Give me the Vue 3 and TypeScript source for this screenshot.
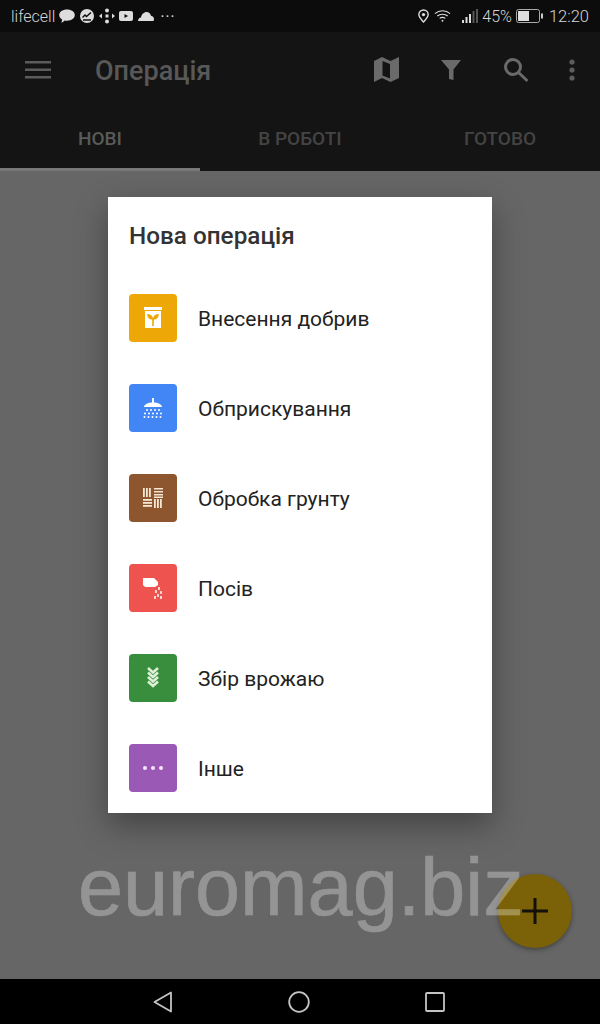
<script setup lang="ts">
interface Operation {
  name: string
  color: string
  icon: 'fert' | 'spray' | 'soil' | 'seed' | 'harvest' | 'other'
}

const operations: Operation[] = [
  { name: 'Внесення добрив', color: '#eda707', icon: 'fert' },
  { name: 'Обприскування', color: '#4285f4', icon: 'spray' },
  { name: 'Обробка грунту', color: '#8e562e', icon: 'soil' },
  { name: 'Посів', color: '#ef5350', icon: 'seed' },
  { name: 'Збір врожаю', color: '#388e3c', icon: 'harvest' },
  { name: 'Інше', color: '#9b59b6', icon: 'other' },
]

const tabs = ['НОВІ', 'В РОБОТІ', 'ГОТОВО']
</script>

<template>
  <div class="phone">
    <div class="status">
      <span class="carrier">lifecell</span>
      <svg class="st-icon" width="16" height="15" viewBox="2 1 16 15"><path d="M10 1.500c4.600 0 7.800 2.400 7.800 5.600S14.600 12.700 10 12.700c-.8 0-1.500-.1-2.200-.2L4.500 15l.6-3.600C3.200 10.400 2.200 8.900 2.200 7.100 2.200 3.900 5.400 1.500 10 1.500z" fill="#ddd" /></svg>
      <svg class="st-icon" width="16" height="16" viewBox="0 0 16 16"><circle cx="8" cy="8" r="7" fill="#ddd" /><path d="M3.500 9.500 6 7l1.500 1.500L12 4.500M4 12h8" stroke="#0c0c0c" stroke-width="1.400" fill="none" /></svg>
      <svg class="st-icon" width="16" height="16" viewBox="0 0 16 16" fill="#ddd"><circle cx="8" cy="2.500" r="2" /><circle cx="8" cy="13.500" r="2" /><rect x="6.500" y="6.500" width="3" height="3" /><path d="M0 8l3-2.500v5zM16 8l-3-2.500v5z" /></svg>
      <svg class="st-icon" width="15" height="12" viewBox="0 0 15 12"><rect width="14" height="10" y="1" rx="2" fill="#ddd" /><path d="M5.500 4v4l3.500-2z" fill="#0c0c0c" /></svg>
      <svg class="st-icon" width="16" height="11" viewBox="0 0 16 11"><path d="M0 10c0-2 1.400-3.300 3-3.500C3.600 3.300 6 1 8.500 1c2.300 0 4 1.500 4.500 3.700 1.700.3 3 1.600 3 3.300 0 .8-.2 1.500-.5 2z" fill="#ddd" /></svg>
      <span class="st-dots">···</span>
      <span class="st-spacer"></span>
      <svg class="st-icon" width="13" height="16" viewBox="0 0 14 16"><path d="M7 1.500a5 5 0 0 1 5 5c0 3-3 5.700-5 8-2-2.300-5-5-5-8a5 5 0 0 1 5-5z" fill="none" stroke="#ddd" stroke-width="1.500" /><circle cx="7" cy="6.500" r="1.800" fill="#ddd" /></svg>
      <svg class="st-icon" width="17" height="14" viewBox="0 0 18 14" fill="none" stroke="#ddd" stroke-width="1.200"><path d="M1 4.500c4.500-4 11.500-4 16 0M3.500 7c3-2.500 8-2.500 11 0M6 9.500c1.700-1.200 4.300-1.200 6 0" /><circle cx="9" cy="12" r="1" fill="#ddd" stroke="none" /></svg>
      <svg class="st-signal" width="16" height="14" viewBox="0 0 16 14"><path d="M0 11h2v3H0zM3.500 8h2v6h-2zM7 5h2v9H7z" fill="#ddd" /><path d="M10.500 2h2v12h-2zM14 0h2v14h-2z" fill="#555" /></svg>
      <span class="st-text">45%</span>
      <svg class="st-icon" width="27" height="14" viewBox="0 0 27 14"><rect x=".5" y=".5" width="23" height="13" rx="2" fill="none" stroke="#aaa" /><rect x="2" y="2" width="11" height="10" fill="#ddd" /><rect x="25" y="4.500" width="2" height="5" fill="#ccc" /></svg>
      <span class="st-text st-time">12:20</span>
    </div>

    <div class="toolbar">
      <svg class="tb-menu" width="26" height="18" viewBox="0 0 26 18" fill="#5c5c5c"><rect y="0" width="26" height="2.500" /><rect y="7.500" width="26" height="2.500" /><rect y="15" width="26" height="2.500" /></svg>
      <span class="tb-title">Операція</span>
      <span class="tb-spacer"></span>
      <svg class="tb-map" width="26" height="26" viewBox="0 0 26 26"><path d="M0 4l8-4 8.500 4L25 0v21l-8.500 4L8 21l-8 4z" fill="#6a6a6a" /><path d="M8.500 4l7.500 3v14.500L8.500 18.500z" fill="#141414" /></svg>
      <svg class="tb-filter" width="20" height="24" viewBox="0 0 20 24"><path d="M0 2h20l-7.500 9.500V22l-4.500-1V11.500z" fill="#6a6a6a" /></svg>
      <svg class="tb-search" width="26" height="26" viewBox="0 0 26 26" fill="none" stroke="#6a6a6a" stroke-width="3"><circle cx="10" cy="10" r="7.500" /><path d="M15.500 15.500 24.500 24" /></svg>
      <svg class="tb-more" width="6" height="24" viewBox="0 0 6 24" fill="#5c5c5c"><circle cx="3" cy="4" r="2.600" /><circle cx="3" cy="12" r="2.600" /><circle cx="3" cy="20" r="2.600" /></svg>
    </div>

    <div class="tabs">
      <div v-for="(tab, i) in tabs" :key="tab" :class="['tab', { 'tab--active': i === 0 }]">{{ tab }}</div>
    </div>

    <div class="content">
      <div class="dialog">
        <div class="dialog-title">Нова операція</div>
        <div v-for="op in operations" :key="op.name" class="row">
          <span class="badge" :style="{ background: op.color }">
            <svg width="48" height="48" viewBox="0 0 48 48">
              <g v-if="op.icon === 'fert'">
                <rect x="15" y="13" width="18" height="3" fill="#fff" />
                <rect x="16" y="17" width="16" height="17" fill="#fff" />
                <path d="M23.200 32v-6.500c-3 0-5-2-5-5.500 3 0 5 1.500 5.800 4 .8-2.500 2.800-4 5.800-4 0 3.500-2 5.500-5 5.500V32z" fill="#eda707" />
              </g>
              <g v-else-if="op.icon === 'spray'" fill="#fff">
                <rect x="23" y="14" width="2" height="5" />
                <path d="M15 23c0-2.500 4-4.500 9-4.500s9 2 9 4.500z" />
                <g>
                  <circle v-for="x in [18, 22, 26, 30]" :key="'a' + x" :cx="x" cy="26" r="1" />
                  <circle v-for="x in [16, 20, 24, 28, 32]" :key="'b' + x" :cx="x" cy="29.500" r="1" />
                  <circle v-for="x in [15, 19, 23, 27, 31]" :key="'c' + x" :cx="x + 0.500" cy="33" r="1" />
                </g>
              </g>
              <g v-else-if="op.icon === 'soil'" fill="#f6e6d4">
                <rect v-for="x in [14, 17, 20]" :key="'v1' + x" :x="x" y="14" width="1.800" height="9" />
                <rect v-for="y in [14, 17, 20, 22.500]" :key="'h1' + y" x="25" :y="y" width="9" height="1.500" />
                <rect v-for="y in [25, 28, 31]" :key="'h2' + y" x="14" :y="y" width="9" height="1.800" />
                <rect v-for="x in [25, 28, 31]" :key="'v2' + x" :x="x" y="25" width="1.800" height="9" />
              </g>
              <g v-else-if="op.icon === 'seed'" fill="#fff">
                <path d="M14 14h11l4 4v3l-3 2H16l-2-2z" />
                <g fill="#f9d7d0">
                  <rect x="29" y="23" width="2" height="3" />
                  <rect x="26" y="26" width="2" height="3" />
                  <rect x="31" y="27" width="2" height="3" />
                  <rect x="28" y="30" width="2" height="3" />
                  <rect x="25" y="32" width="2" height="3" />
                  <rect x="31" y="32" width="2" height="3" />
                </g>
              </g>
              <g v-else-if="op.icon === 'harvest'" fill="none" stroke="#dff0d8" stroke-width="2.600">
                <path d="M19 14l5 4.500 5-4.500" />
                <path d="M19 18.500l5 4.500 5-4.500" />
                <path d="M19 23l5 4.500 5-4.500" />
                <path d="M19 27.500l5 4.500 5-4.500" />
              </g>
              <g v-else fill="#f6e6fb">
                <circle cx="16" cy="24" r="2" />
                <circle cx="24" cy="24" r="2" />
                <circle cx="32" cy="24" r="2" />
              </g>
            </svg>
          </span>
          <span class="row-name">{{ op.name }}</span>
        </div>
      </div>

      <div class="fab">
        <svg width="26" height="26" viewBox="0 0 26 26"><path d="M11.500 0h3v11.500H26v3H14.500V26h-3V14.500H0v-3h11.500z" fill="#14110a" /></svg>
      </div>
      <div class="watermark">euromag.biz</div>
    </div>

    <div class="nav">
      <svg width="20" height="22" viewBox="0 0 20 22"><path d="M18 1.500v19L1.500 11z" fill="none" stroke="#c4c4c4" stroke-width="1.800" stroke-linejoin="round" /></svg>
      <svg width="22" height="22" viewBox="0 0 22 22"><circle cx="11" cy="11" r="9.800" fill="none" stroke="#c4c4c4" stroke-width="1.800" /></svg>
      <svg width="20" height="20" viewBox="0 0 20 20"><rect x="1" y="1" width="18" height="18" rx="1" fill="none" stroke="#c4c4c4" stroke-width="1.800" /></svg>
    </div>
  </div>
</template>

<style scoped>
.phone {
  width: 600px;
  height: 1024px;
  display: flex;
  flex-direction: column;
  overflow: hidden;
  font-family: Roboto, "Liberation Sans", sans-serif;
}

.status {
  height: 32px;
  flex: none;
  display: flex;
  align-items: center;
  gap: 4px;
  padding: 0 11px;
  background: #0c0c0c;
  color: #d6d6d6;
}

.carrier {
  font-size: 16px;
  font-weight: 300;
}

.st-icon {
  flex: none;
}

.st-dots {
  font-size: 17px;
  line-height: 1;
  letter-spacing: 0.5px;
  margin-left: 2px;
}

.st-spacer {
  flex: 1;
}

.st-signal {
  margin-left: 7px;
}

.st-text {
  font-size: 16px;
  font-weight: 300;
}

.st-time {
  margin-left: 2px;
  font-size: 16.5px;
}

.toolbar {
  height: 76px;
  flex: none;
  display: flex;
  align-items: center;
  padding: 0 25px;
  background: #141414;
}

.tb-title {
  margin-left: 44px;
  padding-top: 2px;
  font-size: 27px;
  font-weight: 500;
  color: #585858;
}

.tb-spacer {
  flex: 1;
}

.tb-menu {
  flex: none;
}

.tb-filter {
  margin-left: 41px;
}

.tb-search {
  margin-left: 42px;
}

.tb-more {
  margin-left: 40px;
}

.tabs {
  height: 63px;
  flex: none;
  display: flex;
  background: #141414;
}

.tab {
  flex: 1;
  display: flex;
  align-items: center;
  justify-content: center;
  padding-top: 1px;
  border-bottom: 3px solid transparent;
  font-size: 19px;
  font-weight: 500;
  color: #444;
}

.tab--active {
  color: #5a5a5a;
  border-bottom-color: #787878;
}

.content {
  flex: 1;
  position: relative;
  display: flex;
  flex-direction: column;
  align-items: center;
  padding-top: 26px;
  background: #666;
}

.dialog {
  width: 384px;
  background: #fff;
  box-shadow: 0 12px 30px rgba(0, 0, 0, 0.35);
}

.dialog-title {
  padding: 24px 21px 22px;
  font-size: 24.3px;
  line-height: 30px;
  font-weight: 500;
  color: #333;
}

.row {
  height: 90px;
  display: flex;
  align-items: center;
  gap: 21px;
  padding: 0 21px;
}

.badge {
  width: 48px;
  height: 48px;
  flex: none;
  border-radius: 4px;
  display: block;
}

.badge svg {
  display: block;
}

.row-name {
  padding-top: 1px;
  font-size: 21px;
  color: #222;
}

.watermark {
  position: absolute;
  left: 78px;
  top: 671px;
  font-family: "Liberation Sans", Arial, sans-serif;
  font-size: 81px;
  line-height: 90px;
  color: #fff;
  -webkit-text-stroke: 0.6px #fff;
  opacity: 0.3;
}

.fab {
  position: absolute;
  left: 498px;
  top: 703px;
  width: 74px;
  height: 74px;
  border-radius: 50%;
  display: flex;
  align-items: center;
  justify-content: center;
  background: #7b6107;
  box-shadow: 0 2px 5px rgba(0, 0, 0, 0.35);
}

.nav {
  height: 45px;
  flex: none;
  display: flex;
  align-items: center;
  justify-content: center;
  gap: 115px;
  padding-right: 2px;
  background: #000;
}
</style>

<style>
html,
body {
  margin: 0;
  background: #000;
}
</style>
